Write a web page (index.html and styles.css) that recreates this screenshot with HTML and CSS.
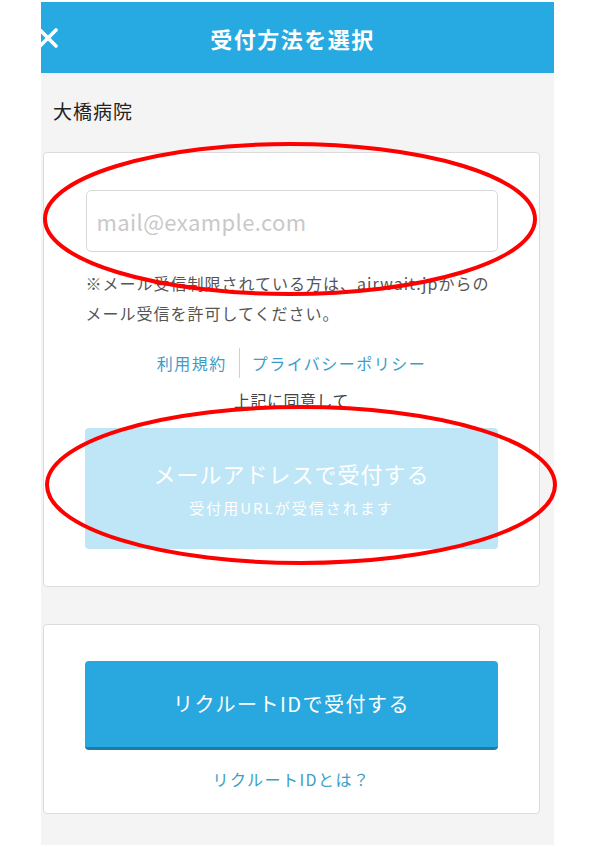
FILE: index.html
```html
<!DOCTYPE html>
<html lang="ja">
  <head>
    <meta charset="UTF-8" />
    <meta name="viewport" content="width=device-width, initial-scale=1.0" />
    <title>受付方法を選択</title>

    <link rel="stylesheet" href="styles.css">
  </head>
  <body>
    <div class="phone">
      <div class="header">
        <div class="close">
          <svg width="22" height="22" viewBox="0 0 22 22">
            <path d="M3 3 L19 19 M19 3 L3 19" stroke="#fff" stroke-width="3.6" stroke-linecap="round" fill="none" />
          </svg>
        </div>
        <div class="title">受付方法を選択</div>
        <div></div>
      </div>

      <div class="shop">大橋病院</div>

      <div class="card mail">
        <input type="text" class="email" placeholder="mail@example.com" />
        <p class="notice">※メール受信制限されている方は、airwait.jpからのメール受信を許可してください。</p>
        <div class="links">
          <a href="#" class="link">利用規約</a>
          <a href="#" class="link sep">プライバシーポリシー</a>
        </div>
        <div class="agree">上記に同意して</div>
        <div class="btn btn-light">
          <div class="btn-main">メールアドレスで受付する</div>
          <div class="btn-sub">受付用URLが受信されます</div>
        </div>
      </div>

      <div class="card rid">
        <div class="btn btn-blue">リクルートIDで受付する</div>
        <a href="#" class="link what">リクルートIDとは？</a>
      </div>
    </div>

    <svg class="marks" width="600" height="847" viewBox="0 0 600 847">
      <ellipse cx="290" cy="219" rx="245" ry="75" fill="none" stroke="#f00" stroke-width="4" />
      <ellipse cx="301" cy="485" rx="254" ry="78" fill="none" stroke="#f00" stroke-width="4" />
    </svg>
  </body>
</html>
```

FILE: styles.css
```css
body {
  margin: 0;
  background: #fff;
  font-family: "Noto Sans CJK JP", "Noto Sans", sans-serif;
}

.phone {
  margin: 2px 0 0 41px;
  width: 513px;
  height: 843px;
  background: #f4f4f4;
  overflow: hidden;
}

.header {
  height: 71px;
  background: #27aae1;
  display: grid;
  grid-template-columns: 30px 1fr 40px;
  align-items: center;
  overflow: hidden;
}

.close {
  margin-left: -4px;
  height: 22px;
}

.title {
  text-align: center;
  color: #fff;
  font-size: 22px;
  font-weight: bold;
  letter-spacing: 1.5px;
}

.shop {
  padding: 24px 12px 0;
  line-height: 28px;
  font-size: 19px;
  letter-spacing: 1px;
  color: #222;
}

.card {
  margin-left: 2px;
  width: 495px;
  background: #fff;
  border: 1px solid #dcdcdc;
  border-radius: 4px;
  display: flex;
  flex-direction: column;
  align-items: center;
}

.mail {
  margin-top: 27px;
  padding: 37px 0 37px;
}

.email {
  box-sizing: border-box;
  width: 412px;
  height: 62px;
  padding: 0 10px;
  border: 1px solid #d8d8d8;
  border-radius: 5px;
  font-family: inherit;
  font-size: 22px;
  letter-spacing: 0.4px;
  outline: none;
}

.email::placeholder {
  color: #c9c9c9;
}

.notice {
  width: 412px;
  margin: 16px 0 0;
  line-height: 30px;
  font-size: 16px;
  letter-spacing: 1px;
  color: #555;
}

.links {
  margin-top: 20px;
  display: flex;
  align-items: center;
  line-height: 30px;
}

.link {
  color: #3c9dc6;
  font-size: 16px;
  letter-spacing: 1.5px;
  text-decoration: none;
}

.sep {
  margin-left: 12px;
  padding-left: 12px;
  border-left: 1px solid #d0d0d0;
}

.agree {
  margin-top: 7px;
  line-height: 30px;
  font-size: 16px;
  letter-spacing: 0.5px;
  color: #444;
}

.btn {
  box-sizing: border-box;
  width: 413px;
  border-radius: 4px;
  color: #fff;
  text-align: center;
}

.btn-light {
  margin-top: 13px;
  height: 121px;
  background: #bee6f7;
  display: flex;
  flex-direction: column;
  justify-content: center;
  gap: 8px;
}

.btn-main {
  line-height: 30px;
  font-size: 22px;
  letter-spacing: 1px;
}

.btn-sub {
  line-height: 24px;
  font-size: 15px;
  letter-spacing: 2px;
}

.rid {
  margin-top: 37px;
  padding: 36px 0 20px;
}

.btn-blue {
  height: 89px;
  line-height: 86px;
  background: #29a8df;
  border-bottom: 3px solid #1c7ca6;
  font-size: 20px;
  letter-spacing: 1.5px;
}

.what {
  margin-top: 15px;
  line-height: 28px;
}

.marks {
  position: absolute;
  top: 0;
  left: 0;
  pointer-events: none;
}
```
